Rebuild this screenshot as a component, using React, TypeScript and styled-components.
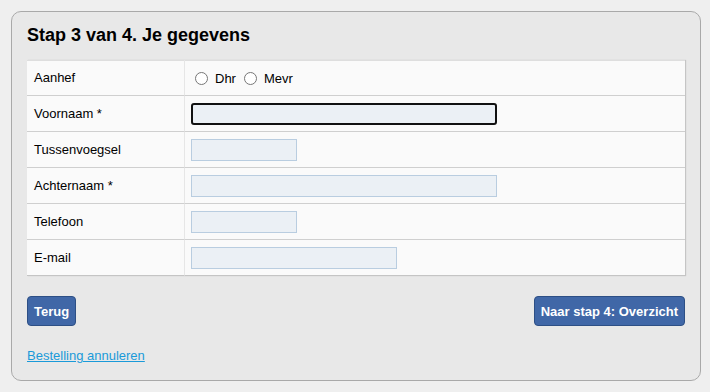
import styled, { createGlobalStyle } from 'styled-components';

type Field = {
    label: string;
    kind: 'radio' | 'text';
    width?: number;
    focused?: boolean;
};

const fields: Field[] = [
    { label: 'Aanhef', kind: 'radio' },
    { label: 'Voornaam *', kind: 'text', width: 306, focused: true },
    { label: 'Tussenvoegsel', kind: 'text', width: 106 },
    { label: 'Achternaam *', kind: 'text', width: 306 },
    { label: 'Telefoon', kind: 'text', width: 106 },
    { label: 'E-mail', kind: 'text', width: 206 },
];

export default function App() {
    return (
        <>
            <GlobalStyle />
            <Panel>
                <Title>Stap 3 van 4. Je gegevens</Title>
                <FormTable>
                    <tbody>
                        {fields.map(({ label, kind, width, focused }) => (
                            <tr key={label}>
                                <LabelCell>{label}</LabelCell>
                                <ValueCell>
                                    {kind === 'radio' ? (
                                        <RadioGroup>
                                            <RadioLabel>
                                                <Radio type='radio' name='aanhef' />
                                                Dhr
                                            </RadioLabel>
                                            <RadioLabel>
                                                <Radio type='radio' name='aanhef' />
                                                Mevr
                                            </RadioLabel>
                                        </RadioGroup>
                                    ) : (
                                        <TextInput type='text' $width={width ?? 106} $focused={focused} />
                                    )}
                                </ValueCell>
                            </tr>
                        ))}
                    </tbody>
                </FormTable>
                <ButtonBar>
                    <NavButton>Terug</NavButton>
                    <NavButton>Naar stap 4: Overzicht</NavButton>
                </ButtonBar>
                <CancelLink href='#'>Bestelling annuleren</CancelLink>
            </Panel>
        </>
    );
}

const GlobalStyle = createGlobalStyle`
    body {
        margin: 0;
        background: #efefef;
        font-family: "Liberation Sans", Arial, sans-serif;
        font-size: 13px;
        color: #000;
    }
`;

const Panel = styled.div`
    box-sizing: border-box;
    width: 690px;
    height: 370px;
    margin: 11px 0 0 11px;
    padding: 13px 15px 0 15px;
    background: #e8e8e8;
    border: 1px solid #a9a9a9;
    border-radius: 10px;
    display: flex;
    flex-direction: column;
`;

const Title = styled.h2`
    margin: 0 0 14px;
    font-size: 18px;
    line-height: 21px;
    font-weight: bold;
`;

const FormTable = styled.table`
    width: 100%;
    border-collapse: separate;
    border-spacing: 0;
    background: #fafafa;
    box-shadow: inset 0 1px 0 #dedede, 1px 0 1px rgba(0, 0, 0, 0.15);

    tr:last-child td {
        border-bottom-color: #c4c4c4;
    }
`;

const Cell = styled.td`
    height: 35px;
    padding: 0;
    border-bottom: 1px solid #cfcfcf;
    vertical-align: middle;
`;

const LabelCell = styled(Cell)`
    box-sizing: border-box;
    width: 158px;
    padding-left: 7px;
    border-right: 1px solid #e6e6e6;
`;

const ValueCell = styled(Cell)`
    padding-left: 6px;
`;

const RadioGroup = styled.div`
    display: flex;
    align-items: center;
    padding-top: 2px;
`;

const RadioLabel = styled.label`
    display: inline-flex;
    align-items: center;
    margin-right: 4px;
    cursor: pointer;
`;

const Radio = styled.input`
    width: 13px;
    height: 13px;
    margin: 0 7px 0 4px;
`;

const TextInput = styled.input<{ $width: number; $focused?: boolean }>`
    box-sizing: border-box;
    display: block;
    width: ${(props) => props.$width}px;
    height: 22px;
    margin: 0;
    padding: 0 3px;
    background: #ebf0f5;
    border: ${(props) => (props.$focused ? '2px solid #111' : '1px solid #b9cde0')};
    border-radius: ${(props) => (props.$focused ? '3px' : '0')};
    outline: none;
    font-family: inherit;
    font-size: 13px;
`;

const ButtonBar = styled.div`
    display: flex;
    justify-content: space-between;
    margin-top: 20px;
`;

const NavButton = styled.button`
    height: 30px;
    padding: 0 6px;
    background: #4067a7;
    border: 1px solid #2d4f85;
    border-radius: 4px;
    color: #fff;
    font-family: inherit;
    font-size: 13px;
    font-weight: bold;
    cursor: pointer;
`;

const CancelLink = styled.a`
    align-self: flex-start;
    margin-top: 22px;
    color: #1a9ad9;
    font-size: 13px;
    text-decoration: underline;
`;
